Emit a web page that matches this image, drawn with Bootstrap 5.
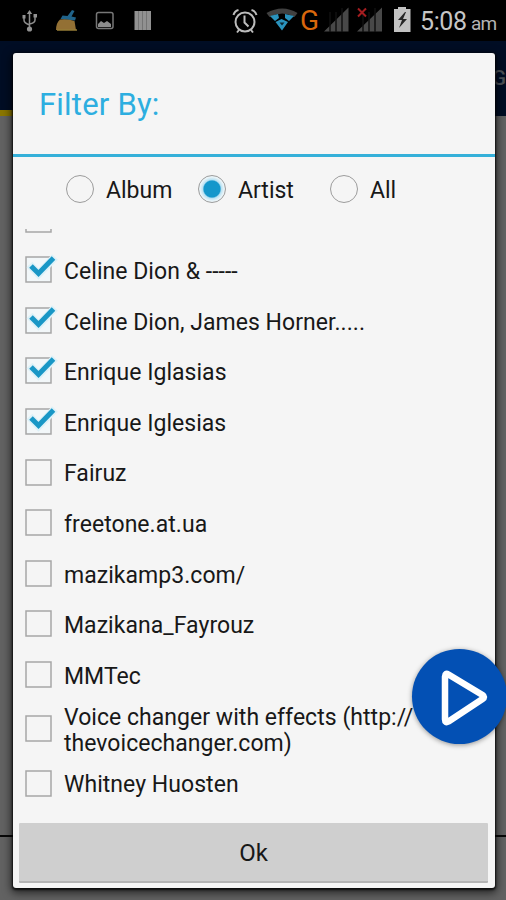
<!DOCTYPE html>
<html lang="en">
<head>
<meta charset="utf-8">
<meta name="viewport" content="width=device-width, initial-scale=1">
<title>Filter By</title>
<link href="https://cdn.jsdelivr.net/npm/bootstrap@5.3.0/dist/css/bootstrap.min.css" rel="stylesheet">
<style>
body{font-family:Roboto,"Liberation Sans",sans-serif;background:#626262;height:900px;color:#181818}
.screen{height:900px}
.status{height:41px;background:#000}
.status svg{display:block;flex:none}
.net{font-size:28px;line-height:41px;color:#d9670c;width:19px;margin-left:2px}
.clock{font-size:25px;line-height:44px;color:#c6c6c6;margin-left:8px;width:51px;letter-spacing:-.4px}
.ampm{font-size:19px;line-height:48px;color:#b4b4b4;letter-spacing:-.8px}
.appbar{height:75px;background:#000d24;color:#4c5158;font-size:21px;font-weight:500;padding-top:22px}
.tabmark{width:13px;height:6px;background:#8a7600;margin-top:-6px}
.page-area{height:721px;border-bottom:2px solid #080808}
.dialog{left:13px;top:53px;width:482px;height:835px;background:#f5f5f5;border-radius:3px;box-shadow:0 1px 2px 1px #000b,0 3px 9px 2px #0009}
.title{height:104px;border-bottom:3px solid #35b0d9;color:#2daee0;font-size:31px;line-height:103px;padding-left:26px;letter-spacing:.2px}
.radios{height:72px;padding:16px 0 0 53px}
.radios label{height:32px;width:132px;gap:12px;font-size:23px}
.radios span{padding-top:4px}
.radios .form-check-input{width:28px;height:28px;border:1.6px solid #9c9c9c;background:#f5f5f5;margin:0;flex:none}
.radios .form-check-input:checked{background:radial-gradient(circle,#1497cb 0 8px,#b9e2f3 9.3px,#eaf4f8 12px)}
.list{height:586px;overflow:hidden;padding-left:12px}
.list-inner{margin-top:-35.2px}
.item{height:50.6px;font-size:23px;line-height:26.5px;letter-spacing:.04px}
.item span{padding-top:5px}
.item.tall{height:58px}
.item svg{flex:none;overflow:visible;margin-right:12px}
.ok{margin:8px 6px 0;width:469px;height:60px;border-radius:1px;background:#cfcfcf;border:0;border-bottom:2px solid #b4b4b4;font-size:24px;color:#181818;padding:2px 0 0}
.play{left:412px;top:649px;width:95px;height:95px;background:#0350b4;box-shadow:0 1px 5px #0006}
</style>
</head>
<body>
<div class="screen position-relative overflow-hidden">
  <header class="status d-flex">
    <svg width="232" height="41" viewBox="0 0 232 41" fill="none">
      <g stroke="#8d8d8d" stroke-width="1.5"><path d="M29.500 13V28M24 17v3q0 3 5.500 5M35 16v4q0 3-5.500 4"/></g>
      <path fill="#929292" d="M29.500 10l2.700 4h-5.400zM22.500 15h3v3.500h-3zM33.500 14h3.500v3.500h-3.500z"/><circle cx="29.500" cy="29" r="2.600" fill="#929292"/>
      <path d="M60.500 19l2-3.500 5 .5 4.500-6 2.500 1-3 5.500 4.500 1-1 3z" fill="#20638a"/><path d="M60 19.500q8-1 14.500 1.500l1.500 9H56q0-7 4-10.500z" fill="#937034"/><path d="M57 30h20" stroke="#967c36" stroke-width="1.500"/>
      <rect x="96.500" y="12.500" width="16.500" height="16" rx="2" stroke="#777" stroke-width="1.500"/><path d="M98 27v-3l3-3 3 2 3-2 4 3v3z" fill="#8c8c8c"/>
      <path fill="#919191" d="M134.500 11H151v19h-16.500z"/><path d="M138.500 11v19M142.500 11v19M146.500 11v19" stroke="#747474"/>
    </svg>
    <svg width="66" height="41" viewBox="232 0 66 41" fill="none">
      <g stroke="#bcbcbc" stroke-width="2"><circle cx="245" cy="22" r="9.500"/><path d="M244.500 15.500v7l4 4M233.500 15q1-4 5-5M256.500 15q-1-4-5-5M239 30l-2 2.500M251 30l2 2.500"/></g>
      <path d="M266.500 13q16-9 31 0l-3 4q-12-7-25 0z" fill="#404040"/>
      <path d="M270 16l8-2 1 4-4 3zM285 14l9 2-5 5-4-3zM275.500 22l6-3 6.500 3-6 8.500z" fill="#2a93bd"/><path d="M279.500 22.500h5l-2.500 3z" fill="#0c2733"/>
    </svg>
    <span class="net">G</span>
    <svg width="93" height="41" viewBox="319 0 93 41" fill="none">
      <path d="M324 31.500L348.500 7.500v24zM357 31.500L382 7.500v24z" fill="#484848"/>
      <path d="M330 12v20M336 12v20M342 8v24M363 12v20M369 12v20M375 8v24" stroke="#111" stroke-width="1.500"/>
      <path d="M358 8.500l8 8M366 8.500l-8 8" stroke="#a51d20" stroke-width="2"/>
      <path d="M394 9h4V7h8v2h4.500v23H394z" fill="#c2c2c2"/><path d="M405 12l-7 8h4l-3 8 8-9h-4l3-7z" fill="#252525"/>
    </svg>
    <span class="clock">5:08</span><span class="ampm">am</span>
  </header>
  <div class="appbar text-end">G</div>
  <div class="tabmark"></div>
  <main class="page-area"></main>

  <section class="dialog position-absolute">
    <h1 class="title fw-normal m-0">Filter By:</h1>
    <div class="radios d-flex">
      <label class="d-flex align-items-center"><input class="form-check-input" type="radio" name="kind"><span>Album</span></label>
      <label class="d-flex align-items-center"><input class="form-check-input" type="radio" name="kind" checked><span>Artist</span></label>
      <label class="d-flex align-items-center"><input class="form-check-input" type="radio" name="kind"><span>All</span></label>
    </div>
    <svg class="d-none">
      <symbol id="box" viewBox="0 0 27 27"><rect x="1" y="1" width="25" height="25" fill="none" stroke="#a6a6a6" stroke-width="1.500"/></symbol>
      <symbol id="tick" viewBox="0 0 27 27" overflow="visible"><rect x="1" y="1" width="25" height="25" fill="#f2f7f9" stroke="#a6a6a6" stroke-width="1.500"/><path d="M4.500 8.500L13.500 18 30 1" fill="none" stroke="#dcf1f8" stroke-width="8"/><path d="M6 10L13.500 17.500 28.500 2" fill="none" stroke="#1997c6" stroke-width="5"/></symbol>
    </svg>
    <div class="list"><div class="list-inner">
      <div class="item d-flex align-items-center"><svg width="27" height="27"><use href="#box"/></svg><span>Celine Dion</span></div>
      <div class="item d-flex align-items-center"><svg width="27" height="27"><use href="#tick"/></svg><span>Celine Dion &amp; -----</span></div>
      <div class="item d-flex align-items-center"><svg width="27" height="27"><use href="#tick"/></svg><span>Celine Dion, James Horner.....</span></div>
      <div class="item d-flex align-items-center"><svg width="27" height="27"><use href="#tick"/></svg><span>Enrique Iglasias</span></div>
      <div class="item d-flex align-items-center"><svg width="27" height="27"><use href="#tick"/></svg><span>Enrique Iglesias</span></div>
      <div class="item d-flex align-items-center"><svg width="27" height="27"><use href="#box"/></svg><span>Fairuz</span></div>
      <div class="item d-flex align-items-center"><svg width="27" height="27"><use href="#box"/></svg><span>freetone.at.ua</span></div>
      <div class="item d-flex align-items-center"><svg width="27" height="27"><use href="#box"/></svg><span>mazikamp3.com/</span></div>
      <div class="item d-flex align-items-center"><svg width="27" height="27"><use href="#box"/></svg><span>Mazikana_Fayrouz</span></div>
      <div class="item d-flex align-items-center"><svg width="27" height="27"><use href="#box"/></svg><span>MMTec</span></div>
      <div class="item tall d-flex align-items-center"><svg width="27" height="27"><use href="#box"/></svg><span>Voice changer with effects (http://<br>thevoicechanger.com)</span></div>
      <div class="item d-flex align-items-center"><svg width="27" height="27"><use href="#box"/></svg><span>Whitney Huosten</span></div>
    </div></div>
    <button class="ok btn d-block" type="button">Ok</button>
  </section>
  <button class="play btn rounded-circle border-0 p-0 position-absolute" type="button" aria-label="Play">
    <svg class="d-block" width="95" height="95" viewBox="0 0 95 95"><path d="M33 27.500v43q0 4 3.500 2L70.500 50q3-2 0-4L36.500 25.500q-3.500-2-3.500 2z" fill="none" stroke="#fff" stroke-width="6.500" stroke-linejoin="round"/></svg>
  </button>
</div>
<script src="https://cdn.jsdelivr.net/npm/bootstrap@5.3.0/dist/js/bootstrap.bundle.min.js"></script>
</body>
</html>
